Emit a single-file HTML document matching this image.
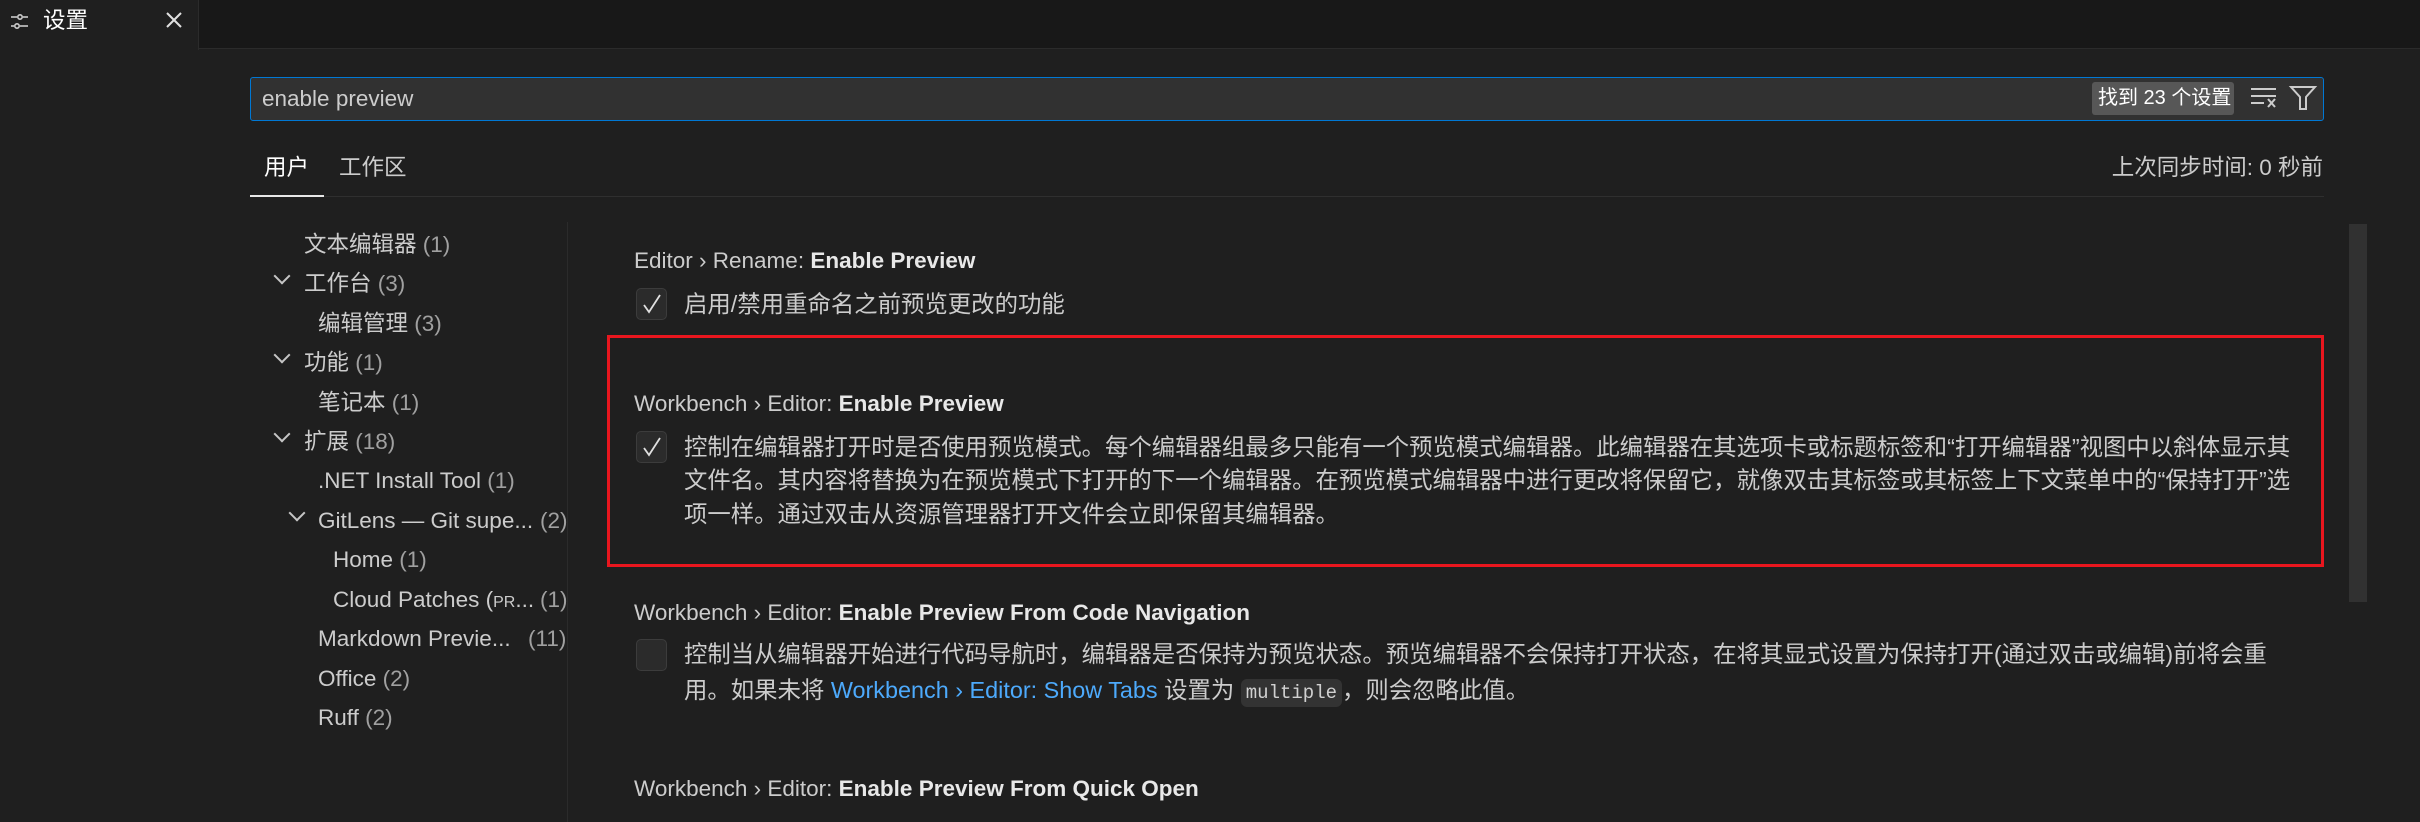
<!DOCTYPE html>
<html><head><meta charset="utf-8"><style>
*{margin:0;padding:0;box-sizing:border-box}
body{width:2420px;height:817px;background:#1f1f1f;overflow:hidden;position:relative;font-family:"Liberation Sans","Noto Sans CJK SC",sans-serif;font-size:22.5px;color:#cccccc}
.a{position:absolute;white-space:nowrap;line-height:34px}
.d{font-size:23.4px}
.t{color:#cccccc}
.t b{color:#e8e8e8;font-weight:bold}
.cnt{color:#a0a0a0}
.cb{position:absolute;width:31px;height:32px;background:#2b2b2b;border:1px solid #3c3c3c;border-radius:5px}
.chev{position:absolute;width:12px;height:12px;border-right:2px solid #c5c5c5;border-bottom:2px solid #c5c5c5;transform:rotate(45deg)}
code{font-family:"Liberation Mono",monospace;font-size:19px;background:#333;border-radius:6px;padding:3px 5px;color:#d0d0d0}
.lnk{color:#4daafc}
</style></head><body>
<div style="position:absolute;left:0;top:0;width:2420px;height:49px;background:#181818;border-bottom:1px solid #2b2b2b"></div>
<div style="position:absolute;left:0;top:0;width:199px;height:50px;background:#1f1f1f;border-right:1px solid #2b2b2b"></div>
<svg style="position:absolute;left:8px;top:10px" width="24" height="24" viewBox="0 0 24 24" fill="none" stroke="#cccccc" stroke-width="1.6"><line x1="3" y1="7" x2="9" y2="7"/><circle cx="12" cy="7" r="2.2"/><line x1="15" y1="7" x2="20" y2="7"/><line x1="3" y1="16" x2="6" y2="16"/><circle cx="9" cy="16" r="2.2"/><line x1="12" y1="16" x2="20" y2="16"/></svg>
<div class="a" style="left:43px;top:4px;color:#fff">设置</div>
<svg style="position:absolute;left:163px;top:9px" width="22" height="22" viewBox="0 0 22 22" stroke="#e0e0e0" stroke-width="2"><line x1="4" y1="4" x2="18" y2="18"/><line x1="18" y1="4" x2="4" y2="18"/></svg>

<div style="position:absolute;left:250px;top:77px;width:2074px;height:44px;background:#313131;border:1px solid #0078d4;border-radius:3px"></div>
<div class="a" style="left:262px;top:82px;color:#cccccc">enable preview</div>
<div style="position:absolute;left:2092px;top:82px;width:142px;height:33px;background:#575757;border-radius:3px"></div>
<div class="a" style="left:2098px;top:81px;color:#fff;font-size:20px">找到 23 个设置</div>
<svg style="position:absolute;left:2248px;top:85px" width="30" height="26" viewBox="0 0 30 26" stroke="#cccccc" stroke-width="2" fill="none"><line x1="3" y1="4" x2="28" y2="4"/><line x1="3" y1="11" x2="28" y2="11"/><line x1="3" y1="18" x2="16" y2="18"/><line x1="20" y1="14" x2="27" y2="22"/><line x1="27" y1="14" x2="20" y2="22"/></svg>
<svg style="position:absolute;left:2288px;top:84px" width="30" height="28" viewBox="0 0 30 28" stroke="#cccccc" stroke-width="2" fill="none"><path d="M3 3 H27 L18 13 V25 H12 V13 Z"/></svg>

<div class="a" style="left:264px;top:151px;color:#fff">用户</div>
<div class="a" style="left:339px;top:151px;color:#cccccc">工作区</div>
<div style="position:absolute;left:250px;top:196px;width:2074px;height:1px;background:#2f2f2f"></div>
<div style="position:absolute;left:250px;top:195px;width:74px;height:2px;background:#e7e7e7"></div>
<div class="a" style="right:97px;top:151px;color:#cccccc">上次同步时间: 0 秒前</div>

<div style="position:absolute;left:567px;top:222px;width:1px;height:600px;background:#2b2b2b"></div>

<div class="a" style="left:304px;top:228px">文本编辑器 <span class="cnt">(1)</span></div>
<div class="chev" style="left:276px;top:270px"></div>
<div class="a" style="left:304px;top:267px">工作台 <span class="cnt">(3)</span></div>
<div class="a" style="left:318px;top:307px">编辑管理 <span class="cnt">(3)</span></div>
<div class="chev" style="left:276px;top:349px"></div>
<div class="a" style="left:304px;top:346px">功能 <span class="cnt">(1)</span></div>
<div class="a" style="left:318px;top:386px">笔记本 <span class="cnt">(1)</span></div>
<div class="chev" style="left:276px;top:428px"></div>
<div class="a" style="left:304px;top:425px">扩展 <span class="cnt">(18)</span></div>
<div class="a" style="left:318px;top:464px">.NET Install Tool <span class="cnt">(1)</span></div>
<div class="chev" style="left:291px;top:507px"></div>
<div class="a" style="left:318px;top:504px">GitLens — Git supe...</div><div class="a cnt" style="left:540px;top:504px">(2)</div>
<div class="a" style="left:333px;top:543px">Home <span class="cnt">(1)</span></div>
<div class="a" style="left:333px;top:583px">Cloud Patches (<span style="font-size:16px">PR</span>...</div><div class="a cnt" style="left:540px;top:583px">(1)</div>
<div class="a" style="left:318px;top:622px">Markdown Previe...</div><div class="a cnt" style="left:528px;top:622px">(11)</div>
<div class="a" style="left:318px;top:662px">Office <span class="cnt">(2)</span></div>
<div class="a" style="left:318px;top:701px">Ruff <span class="cnt">(2)</span></div>

<div class="a t" style="left:634px;top:244px">Editor › Rename: <b>Enable Preview</b></div>
<div class="cb" style="left:636px;top:288px"></div>
<svg style="position:absolute;left:640px;top:292px" width="24" height="24" viewBox="0 0 24 24" stroke="#e0e0e0" stroke-width="1.8" fill="none"><path d="M4 13 L9 20 L20 3"/></svg>
<div class="a d" style="left:684px;top:287px">启用/禁用重命名之前预览更改的功能</div>

<div style="position:absolute;left:607px;top:335px;width:1717px;height:232px;border:3px solid #e8161e"></div>
<div class="a t" style="left:634px;top:387px">Workbench › Editor: <b>Enable Preview</b></div>
<div class="cb" style="left:636px;top:431px"></div>
<svg style="position:absolute;left:640px;top:435px" width="24" height="24" viewBox="0 0 24 24" stroke="#e0e0e0" stroke-width="1.8" fill="none"><path d="M4 13 L9 20 L20 3"/></svg>
<div class="a d" style="left:684px;top:430px">控制在编辑器打开时是否使用预览模式。每个编辑器组最多只能有一个预览模式编辑器。此编辑器在其选项卡或标题标签和“打开编辑器”视图中以斜体显示其</div>
<div class="a d" style="left:684px;top:463px">文件名。其内容将替换为在预览模式下打开的下一个编辑器。在预览模式编辑器中进行更改将保留它，就像双击其标签或其标签上下文菜单中的“保持打开”选</div>
<div class="a d" style="left:684px;top:497px">项一样。通过双击从资源管理器打开文件会立即保留其编辑器。</div>

<div class="a t" style="left:634px;top:596px">Workbench › Editor: <b>Enable Preview From Code Navigation</b></div>
<div class="cb" style="left:636px;top:639px"></div>
<div class="a d" style="left:684px;top:637px">控制当从编辑器开始进行代码导航时，编辑器是否保持为预览状态。预览编辑器不会保持打开状态，在将其显式设置为保持打开(通过双击或编辑)前将会重</div>
<div class="a d" style="left:684px;top:673px">用。如果未将 <span class="lnk">Workbench › Editor: Show Tabs</span> 设置为 <code>multiple</code>，则会忽略此值。</div>

<div class="a t" style="left:634px;top:772px">Workbench › Editor: <b>Enable Preview From Quick Open</b></div>

<div style="position:absolute;left:2349px;top:224px;width:18px;height:378px;background:#313131"></div>
</body></html>
